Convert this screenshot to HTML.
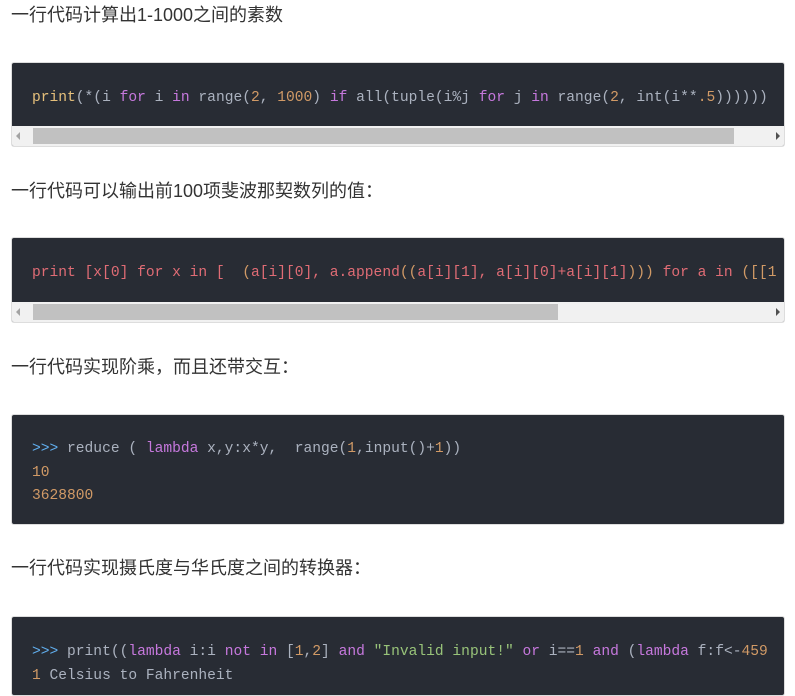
<!DOCTYPE html>
<html><head><meta charset="utf-8"><style>
body{margin:0;background:#fff;width:795px;height:672px;overflow:hidden;font-family:"Liberation Sans","Noto Sans CJK SC",sans-serif;}
.h{position:absolute;left:11px;font-size:18px;color:#333;line-height:24px;}
.blk{position:absolute;left:11px;width:774px;background:#282c34;border-radius:3px;overflow:hidden;border:1px solid #ddd;box-sizing:border-box;}
.code{position:absolute;left:20px;font-family:"Liberation Mono",monospace;font-size:14.6px;color:#abb2bf;white-space:pre;line-height:23.5px;}
.sb{position:absolute;left:0;right:0;bottom:0;height:20px;background:#f1f1f1;}
.th{position:absolute;left:21px;top:2px;height:16px;background:#c1c1c1;}
.la{position:absolute;left:4px;top:6px;width:0;height:0;border-top:4px solid transparent;border-bottom:4px solid transparent;border-right:4px solid #a3a3a3;}
.ra{position:absolute;right:4px;top:6px;width:0;height:0;border-top:4px solid transparent;border-bottom:4px solid transparent;border-left:4px solid #505050;}
.y{color:#e6c07b}.k{color:#c678dd}.n{color:#d19a66}.r{color:#e06c75}.g{color:#98c379}.b{color:#61afef}
</style></head><body>
<div class="h" style="top:3px">一行代码计算出1-1000之间的素数</div>
<div class="blk" style="top:62px;height:85px"><div class="code" style="top:24px"><span class="y">print</span>(*(i <span class="k">for</span> i <span class="k">in</span> range(<span class="n">2</span>, <span class="n">1000</span>) <span class="k">if</span> all(tuple(i%j <span class="k">for</span> j <span class="k">in</span> range(<span class="n">2</span>, int(i**<span class="n">.5</span>))))))</div>
<div class="sb"><div class="la"></div><div class="th" style="width:701px"></div><div class="ra"></div></div></div>
<div class="h" style="top:179px">一行代码可以输出前100项斐波那契数列的值：</div>
<div class="blk" style="top:237px;height:86px"><div class="code" style="top:24px"><span class="r">print [x[0] for x in [</span>  <span class="n">(</span><span class="r">a[i][0], a.append</span><span class="n">((</span><span class="r">a[i][1], a[i][0]+a[i][1]</span><span class="n">)))</span> <span class="r">for a in</span> <span class="n">([[1</span></div>
<div class="sb"><div class="la"></div><div class="th" style="width:525px"></div><div class="ra"></div></div></div>
<div class="h" style="top:355px">一行代码实现阶乘，而且还带交互：</div>
<div class="blk" style="top:414px;height:111px"><div class="code" style="top:23px"><span class="b">&gt;&gt;&gt;</span> reduce ( <span class="k">lambda</span> x,y:x*y,  range(<span class="n">1</span>,input()+<span class="n">1</span>))
<span class="n">10</span>
<span class="n">3628800</span></div></div>
<div class="h" style="top:556px">一行代码实现摄氏度与华氏度之间的转换器：</div>
<div class="blk" style="top:616px;height:80px"><div class="code" style="top:24px"><span class="b">&gt;&gt;&gt;</span> print((<span class="k">lambda</span> i:i <span class="k">not in</span> [<span class="n">1</span>,<span class="n">2</span>] <span class="k">and</span> <span class="g">"Invalid input!"</span> <span class="k">or</span> i==<span class="n">1</span> <span class="k">and</span> (<span class="k">lambda</span> f:f&lt;-<span class="n">459</span>
<span class="n">1</span> Celsius to Fahrenheit</div></div>
</body></html>
